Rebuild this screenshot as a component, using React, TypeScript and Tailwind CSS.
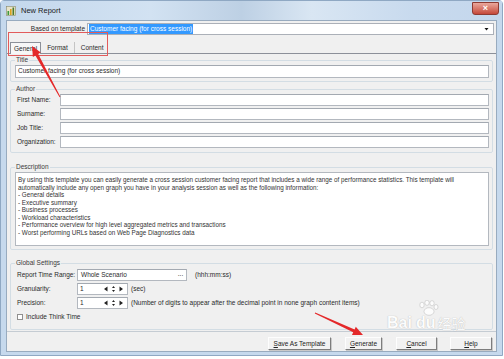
import type { ReactNode } from 'react';

type Pt = [number, number];

// tapered arrow polygon from tail to tip
function arrowPoints(tail: Pt, tip: Pt, head = 10, half = 4.5, t0 = 0.5, t1 = 1.6) {
  const dx = tip[0] - tail[0];
  const dy = tip[1] - tail[1];
  const len = Math.hypot(dx, dy);
  const ux = dx / len;
  const uy = dy / len;
  const px = -uy;
  const py = ux;
  const bx = tip[0] - ux * head;
  const by = tip[1] - uy * head;
  const pts: Pt[] = [
    [tail[0] + px * t0, tail[1] + py * t0],
    [bx + px * t1, by + py * t1],
    [bx + px * half, by + py * half],
    tip,
    [bx - px * half, by - py * half],
    [bx - px * t1, by - py * t1],
    [tail[0] - px * t0, tail[1] - py * t0],
  ];
  return pts.map((p) => `${p[0].toFixed(1)},${p[1].toFixed(1)}`).join(' ');
}

function Box({ children, className = '' }: { children?: ReactNode; className?: string }) {
  return (
    <div
      className={`h-[12px] bg-white border border-[#b3b8bf] border-t-[#a3a9b1] flex items-center px-[2px] leading-none ${className}`}
    >
      {children}
    </div>
  );
}

function Group({ label, children, className = '' }: { label: string; children: ReactNode; className?: string }) {
  return (
    <fieldset className={`border border-[#d3dde4] rounded-[2px] pl-[4px] pr-[3px] ${className}`}>
      <legend className="px-[1px] leading-[8px] text-[#3a3a3a]">{label}</legend>
      {children}
    </fieldset>
  );
}

function Spinner() {
  return (
    <Box className="w-[51px] !px-0">
      <span className="pl-[2px] flex-1">1</span>
      <svg width="22" height="8" viewBox="0 0 22 8" className="mr-[2px]">
        <polygon points="1,4 4.5,1.5 4.5,6.5" fill="#222" />
        <polygon points="9,3 10.5,1 12,3" fill="#222" />
        <polygon points="9,5 10.5,7 12,5" fill="#222" />
        <polygon points="20,4 16.5,1.5 16.5,6.5" fill="#222" />
      </svg>
    </Box>
  );
}

function Button({ label, w }: { label: ReactNode; w: string }) {
  return (
    <div
      className={`${w} h-[13px] flex items-center justify-center bg-[#f2f2f2] border border-t-[#fdfdfd] border-l-[#fdfdfd] border-r-[#7d7d7d] border-b-[#7d7d7d] shadow-[1px_1px_0_#c9c9c9] text-[#222]`}
    >
      {label}
    </div>
  );
}

const description = [
  'By using this template you can easily generate a cross session customer facing report that includes a wide range of performance statistics. This template will',
  'automatically include any open graph you have in your analysis session as well as the following information:',
  '- General details',
  '- Executive summary',
  '- Business processes',
  '- Workload characteristics',
  '- Performance overview for high level aggregated metrics and transactions',
  '- Worst performing URLs based on Web Page Diagnostics data',
];

export default function App() {
  return (
    <div className="relative w-[504px] h-[359px] bg-white overflow-hidden font-['Liberation_Sans',Arial,sans-serif] text-[6.5px] text-[#2a2a2a]">
      <div className="w-[503px] h-[356px] flex flex-col bg-[#c6d9ed] border border-[#8fa8c3] rounded-t-[4px]">
        {/* Title bar */}
        <div className="h-[19px] flex items-center pl-[5px] pr-[3px] bg-[linear-gradient(90deg,#c3d7ec_0%,#d2e2f2_30%,#bdd0e4_48%,#d9e6f3_62%,#c8daee_82%,#c4d7ec_100%)]">
          <svg width="10" height="10" viewBox="0 0 10 10">
            <rect x="0.5" y="0.5" width="9" height="9" fill="#e9e3c8" stroke="#8a8a6a" strokeWidth="0.6" />
            <rect x="1.5" y="5" width="1.6" height="4" fill="#3c9a3c" />
            <rect x="4" y="3" width="1.6" height="6" fill="#d9a21f" />
            <rect x="6.5" y="1.5" width="1.6" height="7.5" fill="#4a7a2a" />
          </svg>
          <span className="ml-[5px] text-[7.5px] text-[#1b1b1b]">New Report</span>
          <div className="flex-1" />
          <div className="w-[27px] h-[13px] -mt-[4px] rounded-b-[3px] bg-gradient-to-b from-[#e9a79c] to-[#c4473a] border border-[#8e3b33] flex items-center justify-center text-white text-[9px] font-bold leading-none">
            ×
          </div>
        </div>

        {/* Client area */}
        <div className="flex-1 mx-[5px] mb-[3px] bg-[#f0f0f0] border border-[#98abbf] flex flex-col">
          {/* Template row */}
          <div className="mt-[2px] flex items-center h-[12px]">
            <div className="w-[80px] pr-[2px] text-right">Based on template</div>
            <div className="flex-1 mr-[2px] h-[12px] bg-white border border-[#abb0b8] flex items-center pl-[1px]">
              <span className="bg-[#3399ff] text-white px-[1px] leading-[10px]">Customer facing (for cross session)</span>
              <div className="flex-1" />
              <svg width="9" height="8" viewBox="0 0 9 8" className="mr-[2px]">
                <polygon points="2.5,3 6.5,3 4.5,5.5" fill="#111" />
              </svg>
            </div>
          </div>

          {/* Tabs */}
          <div className="mt-[7px] h-[12px] flex items-end pl-[3px] border-b border-[#8c9099]">
            <div className="h-[12px] px-[3px] flex items-center border border-b-0 border-[#8c9099] bg-[#f7f7f7] -mb-px">
              General
            </div>
            <div className="h-[11px] px-[6px] flex items-center border-r border-[#c4c4c4]">Format</div>
            <div className="h-[11px] px-[6px] flex items-center">Content</div>
          </div>

          {/* Panel */}
          <div className="h-[278px] px-[3px] pt-[2px] border-b border-[#c5ccd3]">
            <Group label="Title" className="pb-[3px]">
              <Box className="mt-[1px] !h-[13px]">Customer facing (for cross session)</Box>
            </Group>

            <Group label="Author" className="mt-[3px] pb-[4px]">
              <div className="mt-[1px] flex flex-col gap-[2px]">
                {['First Name:', 'Surname:', 'Job Title:', 'Organization:'].map((l) => (
                  <div key={l} className="flex items-center">
                    <div className="w-[45px] pl-[2px]">{l}</div>
                    <Box className="flex-1" />
                  </div>
                ))}
              </div>
            </Group>

            <Group label="Description" className="mt-[10px] pb-[3px]">
              <div className="mt-[1px] h-[74px] bg-white border border-[#b3b8bf] px-[2px] pt-[3px] text-[6.3px] leading-[7.5px] text-[#333]">
                {description.map((d) => (
                  <div key={d} className="whitespace-nowrap">
                    {d}
                  </div>
                ))}
              </div>
            </Group>

            <Group label="Global Settings" className="mt-[9px] pb-[6px]">
              <div className="mt-[2px] flex flex-col gap-[2px]">
                <div className="flex items-center">
                  <div className="w-[62px] pl-[2px]">Report Time Range:</div>
                  <Box className="w-[110px] !px-[3px]">
                    <span className="flex-1">Whole Scenario</span>
                    <span className="text-[7px] tracking-[-0.5px]">···</span>
                  </Box>
                  <span className="ml-[8px]">(hhh:mm:ss)</span>
                </div>
                <div className="flex items-center">
                  <div className="w-[62px] pl-[2px]">Granularity:</div>
                  <Spinner />
                  <span className="ml-[3px]">(sec)</span>
                </div>
                <div className="flex items-center">
                  <div className="w-[62px] pl-[2px]">Precision:</div>
                  <Spinner />
                  <span className="ml-[3px]">(Number of digits to appear after the decimal point in none graph content items)</span>
                </div>
                <div className="flex items-center h-[12px] pl-[2px]">
                  <div className="w-[6px] h-[6px] bg-white border border-[#8f8f8f]" />
                  <span className="ml-[3px]">Include Think Time</span>
                </div>
              </div>
            </Group>
          </div>

          {/* Buttons */}
          <div className="mt-[5px] flex items-center justify-end pr-[4px]">
            <Button w="w-[63px]" label={<span><u>S</u>ave As Template</span>} />
            <div className="w-[14px]" />
            <Button w="w-[37px]" label={<span><u>G</u>enerate</span>} />
            <div className="w-[14px]" />
            <Button w="w-[41px]" label={<span><u>C</u>ancel</span>} />
            <div className="w-[13px]" />
            <Button w="w-[42px]" label={<span><u>H</u>elp</span>} />
          </div>
        </div>
      </div>

      {/* Baidu watermark */}
      <div className="absolute left-[387px] top-[300px] pointer-events-none opacity-80">
        <svg width="22" height="16" viewBox="0 0 22 16" className="absolute left-[30px] top-[0px]">
          <g fill="#ffffff" stroke="#b8b8b8" strokeWidth="0.6">
            <ellipse cx="5" cy="5" rx="2.2" ry="2.8" />
            <ellipse cx="10" cy="2.8" rx="2.2" ry="2.6" />
            <ellipse cx="15" cy="3.2" rx="2.2" ry="2.6" />
            <ellipse cx="19" cy="7" rx="2" ry="2.5" />
            <ellipse cx="12" cy="11.5" rx="5" ry="3.8" />
          </g>
        </svg>
        <div className="mt-[15px] flex items-end text-[16px] font-bold leading-none text-white font-['Liberation_Sans','Noto_Sans_CJK_SC',sans-serif] [text-shadow:0_0_1px_#9a9a9a]">
          <span>Bai</span>
          <span className="ml-[4px]">du</span>
          <span className="ml-[2px] text-[14px] font-normal">经验</span>
        </div>
      </div>

      {/* Red annotations */}
      <div className="absolute left-[8px] top-[32px] w-[100px] h-[24px] border border-[#e25b5b] pointer-events-none" />
      <svg className="absolute inset-0 pointer-events-none" width="504" height="359">
        <polygon points={arrowPoints([60, 97], [32, 46])} fill="#e4292a" />
        <polygon points={arrowPoints([315, 313], [363, 335])} fill="#e4292a" />
      </svg>
    </div>
  );
}
